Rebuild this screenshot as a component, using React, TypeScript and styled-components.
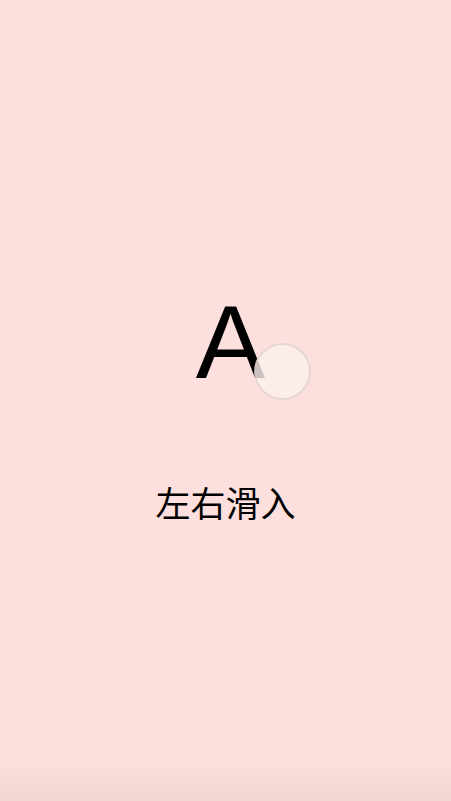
import React from 'react'
import styled, { createGlobalStyle } from 'styled-components'

const GlobalStyle = createGlobalStyle`
  html, body {
    margin: 0;
    padding: 0;
    background: #fde0dd;
  }
  * {
    box-sizing: border-box;
  }
`

const Page = styled.div`
  display: flex;
  flex-direction: column;
  align-items: center;
  height: 801px;
  width: 100%;
  background: linear-gradient(
    to bottom,
    #fde0dd 0%,
    #fde0dd 95.5%,
    #f3d5d4 100%
  );
  font-family: 'Liberation Sans', Arial, sans-serif;
  color: #000;
  overflow: hidden;
`

const LetterWrap = styled.div`
  position: relative;
  margin-top: 290px;
  margin-left: 10px;
`

const Letter = styled.div`
  font-family: 'Liberation Sans', Arial, sans-serif;
  font-size: 104px;
  line-height: 1;
`

const Touch = styled.div`
  position: absolute;
  left: 58px;
  top: 53px;
  width: 57px;
  height: 57px;
  border-radius: 50%;
  background: rgba(252, 240, 238, 0.8);
  border: 2px solid rgba(205, 192, 190, 0.5);
`

const Caption = styled.div`
  margin-top: 90px;
  font-family: 'Noto Sans CJK SC', 'Noto Sans', sans-serif;
  font-size: 35px;
  line-height: 1;
`

export default function App() {
  return (
    <>
      <GlobalStyle />
      <Page>
        <LetterWrap>
          <Letter>A</Letter>
          <Touch />
        </LetterWrap>
        <Caption>左右滑入</Caption>
      </Page>
    </>
  )
}
